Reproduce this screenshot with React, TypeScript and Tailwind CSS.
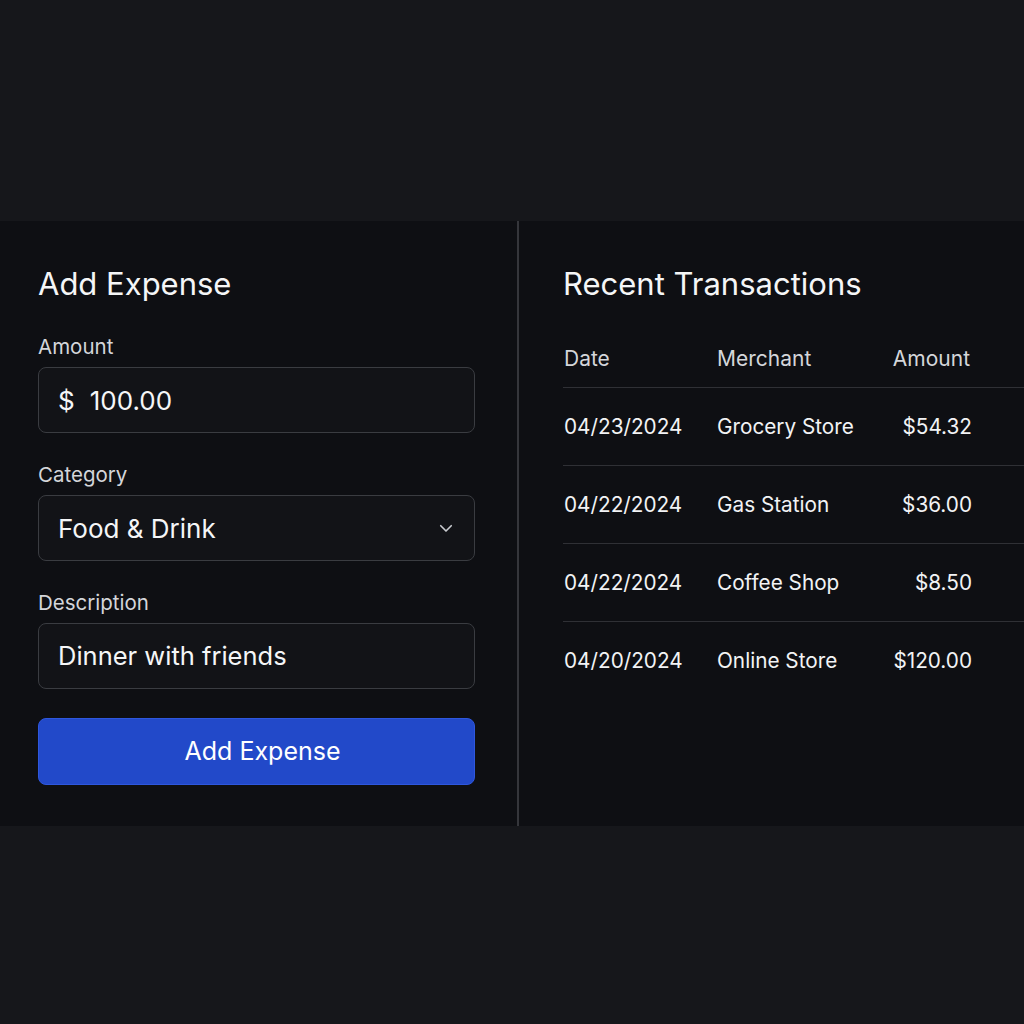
import React from "react";

const rows = [
  { date: "04/23/2024", merchant: "Grocery Store", amount: "$54.32" },
  { date: "04/22/2024", merchant: "Gas Station", amount: "$36.00" },
  { date: "04/22/2024", merchant: "Coffee Shop", amount: "$8.50" },
  { date: "04/20/2024", merchant: "Online Store", amount: "$120.00" },
];

export default function App() {
  return (
    <div
      className="w-[1024px] h-[1024px] bg-[#16171b] flex flex-col text-white"
      style={{ fontFamily: "Inter, 'Noto Sans', sans-serif" }}
    >
      <div className="h-[221px]" />
      <div className="h-[605px] bg-[#0e0f13] flex">
        {/* Left panel */}
        <div className="w-[519px] border-r-2 border-[#35363b] pl-[38px] pr-[42px] flex flex-col">
          <h2 className="mt-[45px] text-[31px] leading-[36px] text-[#f5f6f7]">Add Expense</h2>
          <label className="mt-[33px] text-[20.5px] leading-[24px] text-[#d4d6da]">Amount</label>
          <div className="mt-[8px] h-[66px] rounded-[8px] border-[1.5px] border-[#3a3c41] bg-[#121317] flex items-center pl-[19px] text-[26px] text-[#f5f6f7]">
            <span>$</span>
            <span className="ml-[15px]">100.00</span>
          </div>
          <label className="mt-[30px] text-[20.5px] leading-[24px] text-[#d4d6da]">Category</label>
          <div className="mt-[8px] h-[66px] rounded-[8px] border-[1.5px] border-[#3a3c41] bg-[#121317] flex items-center justify-between pl-[19px] pr-[19px] text-[26px] text-[#f5f6f7]">
            <span>Food &amp; Drink</span>
            <svg width="18" height="18" viewBox="0 0 24 24" fill="none" stroke="#c9cbd0" strokeWidth="2.2" strokeLinecap="round" strokeLinejoin="round">
              <path d="M5 9l7 7 7-7" />
            </svg>
          </div>
          <label className="mt-[30px] text-[20.5px] leading-[24px] text-[#d4d6da]">Description</label>
          <div className="mt-[8px] h-[66px] rounded-[8px] border-[1.5px] border-[#3a3c41] bg-[#121317] flex items-center pl-[19px] text-[25.5px] text-[#f5f6f7]">
            Dinner with friends
          </div>
          <button className="mt-[29px] h-[67px] rounded-[8px] bg-[#2249c9] border border-[#2e57de] pl-[12px] text-[25px] text-white flex items-center justify-center">
            Add Expense
          </button>
        </div>
        {/* Right panel */}
        <div className="flex-1 pl-[44px] flex flex-col">
          <h2 className="mt-[45px] text-[31px] leading-[36px] text-[#f5f6f7]">Recent Transactions</h2>
          <div className="mt-[32px] flex items-center h-[54px] border-b-[1.5px] border-[#2f3035] text-[21px] text-[#d4d6da] pb-[4px]">
            <div className="w-[154px] pl-[1px]">Date</div>
            <div className="w-[174px]">Merchant</div>
            <div className="w-[79px] text-right">Amount</div>
          </div>
          {rows.map((r, i) => (
            <div
              key={i}
              className={`flex items-center h-[78px] text-[20.75px] text-[#f2f3f5] ${i < rows.length - 1 ? "border-b-[1.5px] border-[#2f3035]" : ""}`}
            >
              <div className="w-[154px] pl-[1px]">{r.date}</div>
              <div className="w-[174px]">{r.merchant}</div>
              <div className="w-[81px] text-right">{r.amount}</div>
            </div>
          ))}
        </div>
      </div>
      <div className="flex-1" />
    </div>
  );
}
